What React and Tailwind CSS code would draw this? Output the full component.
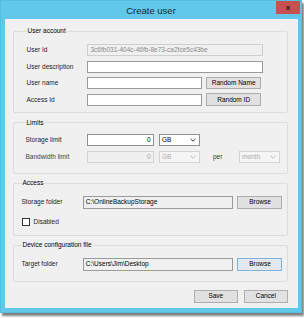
import React from "react";

function Chevron({ disabled }) {
  return (
    <svg width="6" height="4" viewBox="0 0 6 4" className="shrink-0">
      <path d="M0.5 0.8 L3 3.2 L5.5 0.8" fill="none" stroke={disabled ? "#b0b0b0" : "#222"} strokeWidth="0.9" />
    </svg>
  );
}

function Select({ value, disabled, w }) {
  return (
    <div
      className={`h-[12.5px] ${w} flex items-center justify-between pl-[2px] pr-[3px] border ${
        disabled ? "border-[#d4d4d4] bg-[#f5f5f5] text-[#a8a8a8]" : "border-[#8f8f8f] bg-white text-black"
      }`}
    >
      <span>{value}</span>
      <Chevron disabled={disabled} />
    </div>
  );
}

function Btn({ children, w, blue }) {
  return (
    <div
      className={`h-[12.5px] ${w} flex items-center justify-center border ${
        blue ? "border-[#7fb3dd] bg-[#e3e8ee]" : "border-[#adadad] bg-[#e1e1e1]"
      } text-black`}
    >
      {children}
    </div>
  );
}

function Group({ title, children, className }) {
  return (
    <fieldset className={`border border-[#dcdcdc] rounded-[2px] ${className}`}>
      <legend className="leading-[8px] px-[1px] text-black">{title}</legend>
      {children}
    </fieldset>
  );
}

export default function App() {
  return (
    <div className="w-[304px] h-[318px] bg-white text-[6.5px] leading-[8px] text-black font-['Liberation_Sans',Arial,sans-serif]">
      <div className="w-[302px] h-[313px] bg-[#62c8ea] border border-[#55bde0] shadow-[2px_3px_2px_rgba(0,0,0,0.5)] flex flex-col relative">
        <div className="h-[18px] flex items-center justify-center text-[#1b2a33]">
          <p className="text-[9.5px] leading-[10px] font-normal mt-[1px]">Create user</p>
        </div>
        <div className="absolute top-0 right-[1px] w-[24px] h-[13px] bg-[#c75050] flex items-center justify-center text-[#1a1a1a]">
          <p className="text-[8px] leading-[8px] font-bold">x</p>
        </div>
        <div className="flex-1 ml-[4px] mr-[3px] mb-[4px] bg-[#f0f0f0] pl-[8px] pr-[10px] pt-[8px] flex flex-col">
          <Group title="User account" className="pl-[12.5px] pt-[9px] pb-[6px]">
            <div className="flex flex-col gap-[4.5px]">
              <div className="flex items-center h-[12px]">
                <span className="w-[60.5px] text-[#222]">User Id</span>
                <div className="w-[175.5px] h-[12px] border border-[#cfcfcf] bg-[#f0f0f0] text-[#8a8a8a] flex items-center pl-[2.5px]">
                  3c6fb031-404c-46fb-8e73-ca2fce5c43be
                </div>
              </div>
              <div className="flex items-center h-[12px]">
                <span className="w-[60.5px] text-[#222]">User description</span>
                <div className="w-[175.5px] h-[12px] border border-[#9a9a9a] bg-white" />
              </div>
              <div className="flex items-center h-[12px]">
                <span className="w-[60.5px] text-[#222]">User name</span>
                <div className="w-[114.5px] h-[12px] border border-[#9a9a9a] bg-white" />
                <div className="ml-[4.3px]">
                  <Btn w="w-[55.7px]">Random Name</Btn>
                </div>
              </div>
              <div className="flex items-center h-[12px]">
                <span className="w-[60.5px] text-[#222]">Access Id</span>
                <div className="w-[114.5px] h-[12px] border border-[#9a9a9a] bg-white" />
                <div className="ml-[4.3px]">
                  <Btn w="w-[55.7px]">Random ID</Btn>
                </div>
              </div>
            </div>
          </Group>

          <Group title="Limits" className="mt-[6px] pl-[11.5px] pt-[7px] pb-[10px]">
            <div className="flex flex-col gap-[5px]">
              <div className="flex items-center h-[12.5px]">
                <span className="w-[61.5px] text-[#222]">Storage limit</span>
                <div className="w-[66.7px] h-[12.5px] border border-[#8f8f8f] bg-white flex items-center justify-end pr-[2px] text-black">
                  0
                </div>
                <div className="ml-[5.3px]">
                  <Select value="GB" w="w-[41.4px]" />
                </div>
              </div>
              <div className="flex items-center h-[12px]">
                <span className="w-[61.5px] text-[#444]">Bandwidth limit</span>
                <div className="w-[66.7px] h-[12px] border border-[#d4d4d4] bg-[#f0f0f0] flex items-center justify-end pr-[2px] text-[#a8a8a8]">
                  0
                </div>
                <div className="ml-[5.3px]">
                  <Select value="GB" disabled w="w-[41.4px]" />
                </div>
                <span className="ml-[12.6px] w-[26px] text-[#333]">per</span>
                <Select value="month" disabled w="w-[41.4px]" />
              </div>
            </div>
          </Group>

          <Group title="Access" className="mt-[5px] pl-[7.5px] pt-[9px] pb-[9px]">
            <div className="flex items-center h-[12.5px]">
              <span className="w-[61.6px] text-[#222]">Storage folder</span>
              <div className="w-[150px] h-[12.5px] border border-[#9a9a9a] bg-[#f0f0f0] flex items-center pl-[1.7px] text-black">
                C:\OnlineBackupStorage
              </div>
              <div className="ml-[4.4px]">
                <Btn w="w-[45px]">Browse</Btn>
              </div>
            </div>
            <div className="flex items-center mt-[9px] h-[8px]">
              <div className="w-[8px] h-[8px] border border-[#333] bg-white" />
              <span className="ml-[4px] text-[#222]">Disabled</span>
            </div>
          </Group>

          <Group title="Device configuration file" className="mt-[5.5px] pl-[7.5px] pt-[9px] pb-[10px]">
            <div className="flex items-center h-[12.5px]">
              <span className="w-[61.6px] text-[#222]">Target folder</span>
              <div className="w-[150px] h-[12.5px] border border-[#9a9a9a] bg-[#f0f0f0] flex items-center pl-[1.7px] text-black">
                C:\Users\Jim\Desktop
              </div>
              <div className="ml-[4.4px]">
                <Btn w="w-[45px]" blue>
                  Browse
                </Btn>
              </div>
            </div>
          </Group>

          <div className="flex justify-end gap-[5.6px] mt-[8px]">
            <Btn w="w-[44.4px] h-[13px]">Save</Btn>
            <Btn w="w-[44.4px] h-[13px]">Cancel</Btn>
          </div>
        </div>
      </div>
    </div>
  );
}
